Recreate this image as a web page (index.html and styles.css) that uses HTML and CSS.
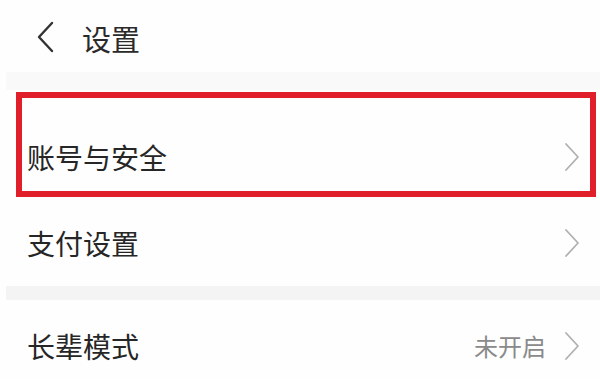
FILE: index.html
```html
<!DOCTYPE html>
<html lang="zh-CN">
<head>
<meta charset="utf-8">
<link rel="stylesheet" href="styles.css">
</head>
<body>
<div class="page">
  <header class="header">
    <svg class="back" width="18" height="32" viewBox="0 0 18 32"><polyline points="16,2 3,16 16,30" fill="none" stroke="#333" stroke-width="2.4" stroke-linecap="round" stroke-linejoin="round"/></svg>
    <span class="title">设置</span>
  </header>
  <div class="band"></div>
  <div class="row row-first">
    <span class="label">账号与安全</span>
    <svg class="chev" width="16" height="30" viewBox="0 0 16 30"><polyline points="2,2 14,15 2,28" fill="none" stroke="#b0b0b0" stroke-width="1.8" stroke-linecap="round" stroke-linejoin="round"/></svg>
  </div>
  <div class="row">
    <span class="label">支付设置</span>
    <svg class="chev" width="16" height="30" viewBox="0 0 16 30"><polyline points="2,2 14,15 2,28" fill="none" stroke="#b0b0b0" stroke-width="1.8" stroke-linecap="round" stroke-linejoin="round"/></svg>
  </div>
  <div class="band band-2"></div>
  <div class="row row-last">
    <span class="label">长辈模式</span>
    <span class="value">未开启</span>
    <svg class="chev" width="16" height="30" viewBox="0 0 16 30"><polyline points="2,2 14,15 2,28" fill="none" stroke="#b0b0b0" stroke-width="1.8" stroke-linecap="round" stroke-linejoin="round"/></svg>
  </div>
  <div class="highlight"></div>
</div>
</body>
</html>
```
FILE: styles.css
```css
html, body {
  margin: 0;
  padding: 0;
  background: #fefefe;
}
body {
  font-family: "Noto Sans CJK SC", "Noto Sans", sans-serif;
  color: #222;
}
.page {
  position: relative;
  width: 600px;
  height: 379px;
  overflow: hidden;
}
.header {
  height: 72px;
  display: flex;
  align-items: center;
  padding-left: 36px;
  padding-top: 4px;
  gap: 28px;
  box-sizing: border-box;
}
.back {
  display: block;
  margin-top: -2px;
}
.title {
  font-size: 29px;
  line-height: 1;
  color: #2a2a2a;
}
.band {
  height: 18px;
  background: #f9f9f9;
  margin-left: 6px;
}
.band-2 {
  height: 14px;
  background: #f4f4f4;
}
.row {
  height: 86px;
  display: flex;
  align-items: center;
  padding: 0 20px 0 27px;
  box-sizing: border-box;
}
.row-first {
  height: 110px;
  padding-top: 24px;
}
.row-last {
  height: 92px;
}
.label {
  flex: 1;
  font-size: 28px;
  line-height: 1;
  color: #262626;
}
.value {
  font-size: 24px;
  line-height: 1;
  color: #8a8a8a;
  margin-right: 18px;
}
.chev {
  display: block;
}
.highlight {
  position: absolute;
  left: 16px;
  top: 92px;
  width: 580px;
  height: 105px;
  box-sizing: border-box;
  border: 6px solid #e01f2b;
}
```
